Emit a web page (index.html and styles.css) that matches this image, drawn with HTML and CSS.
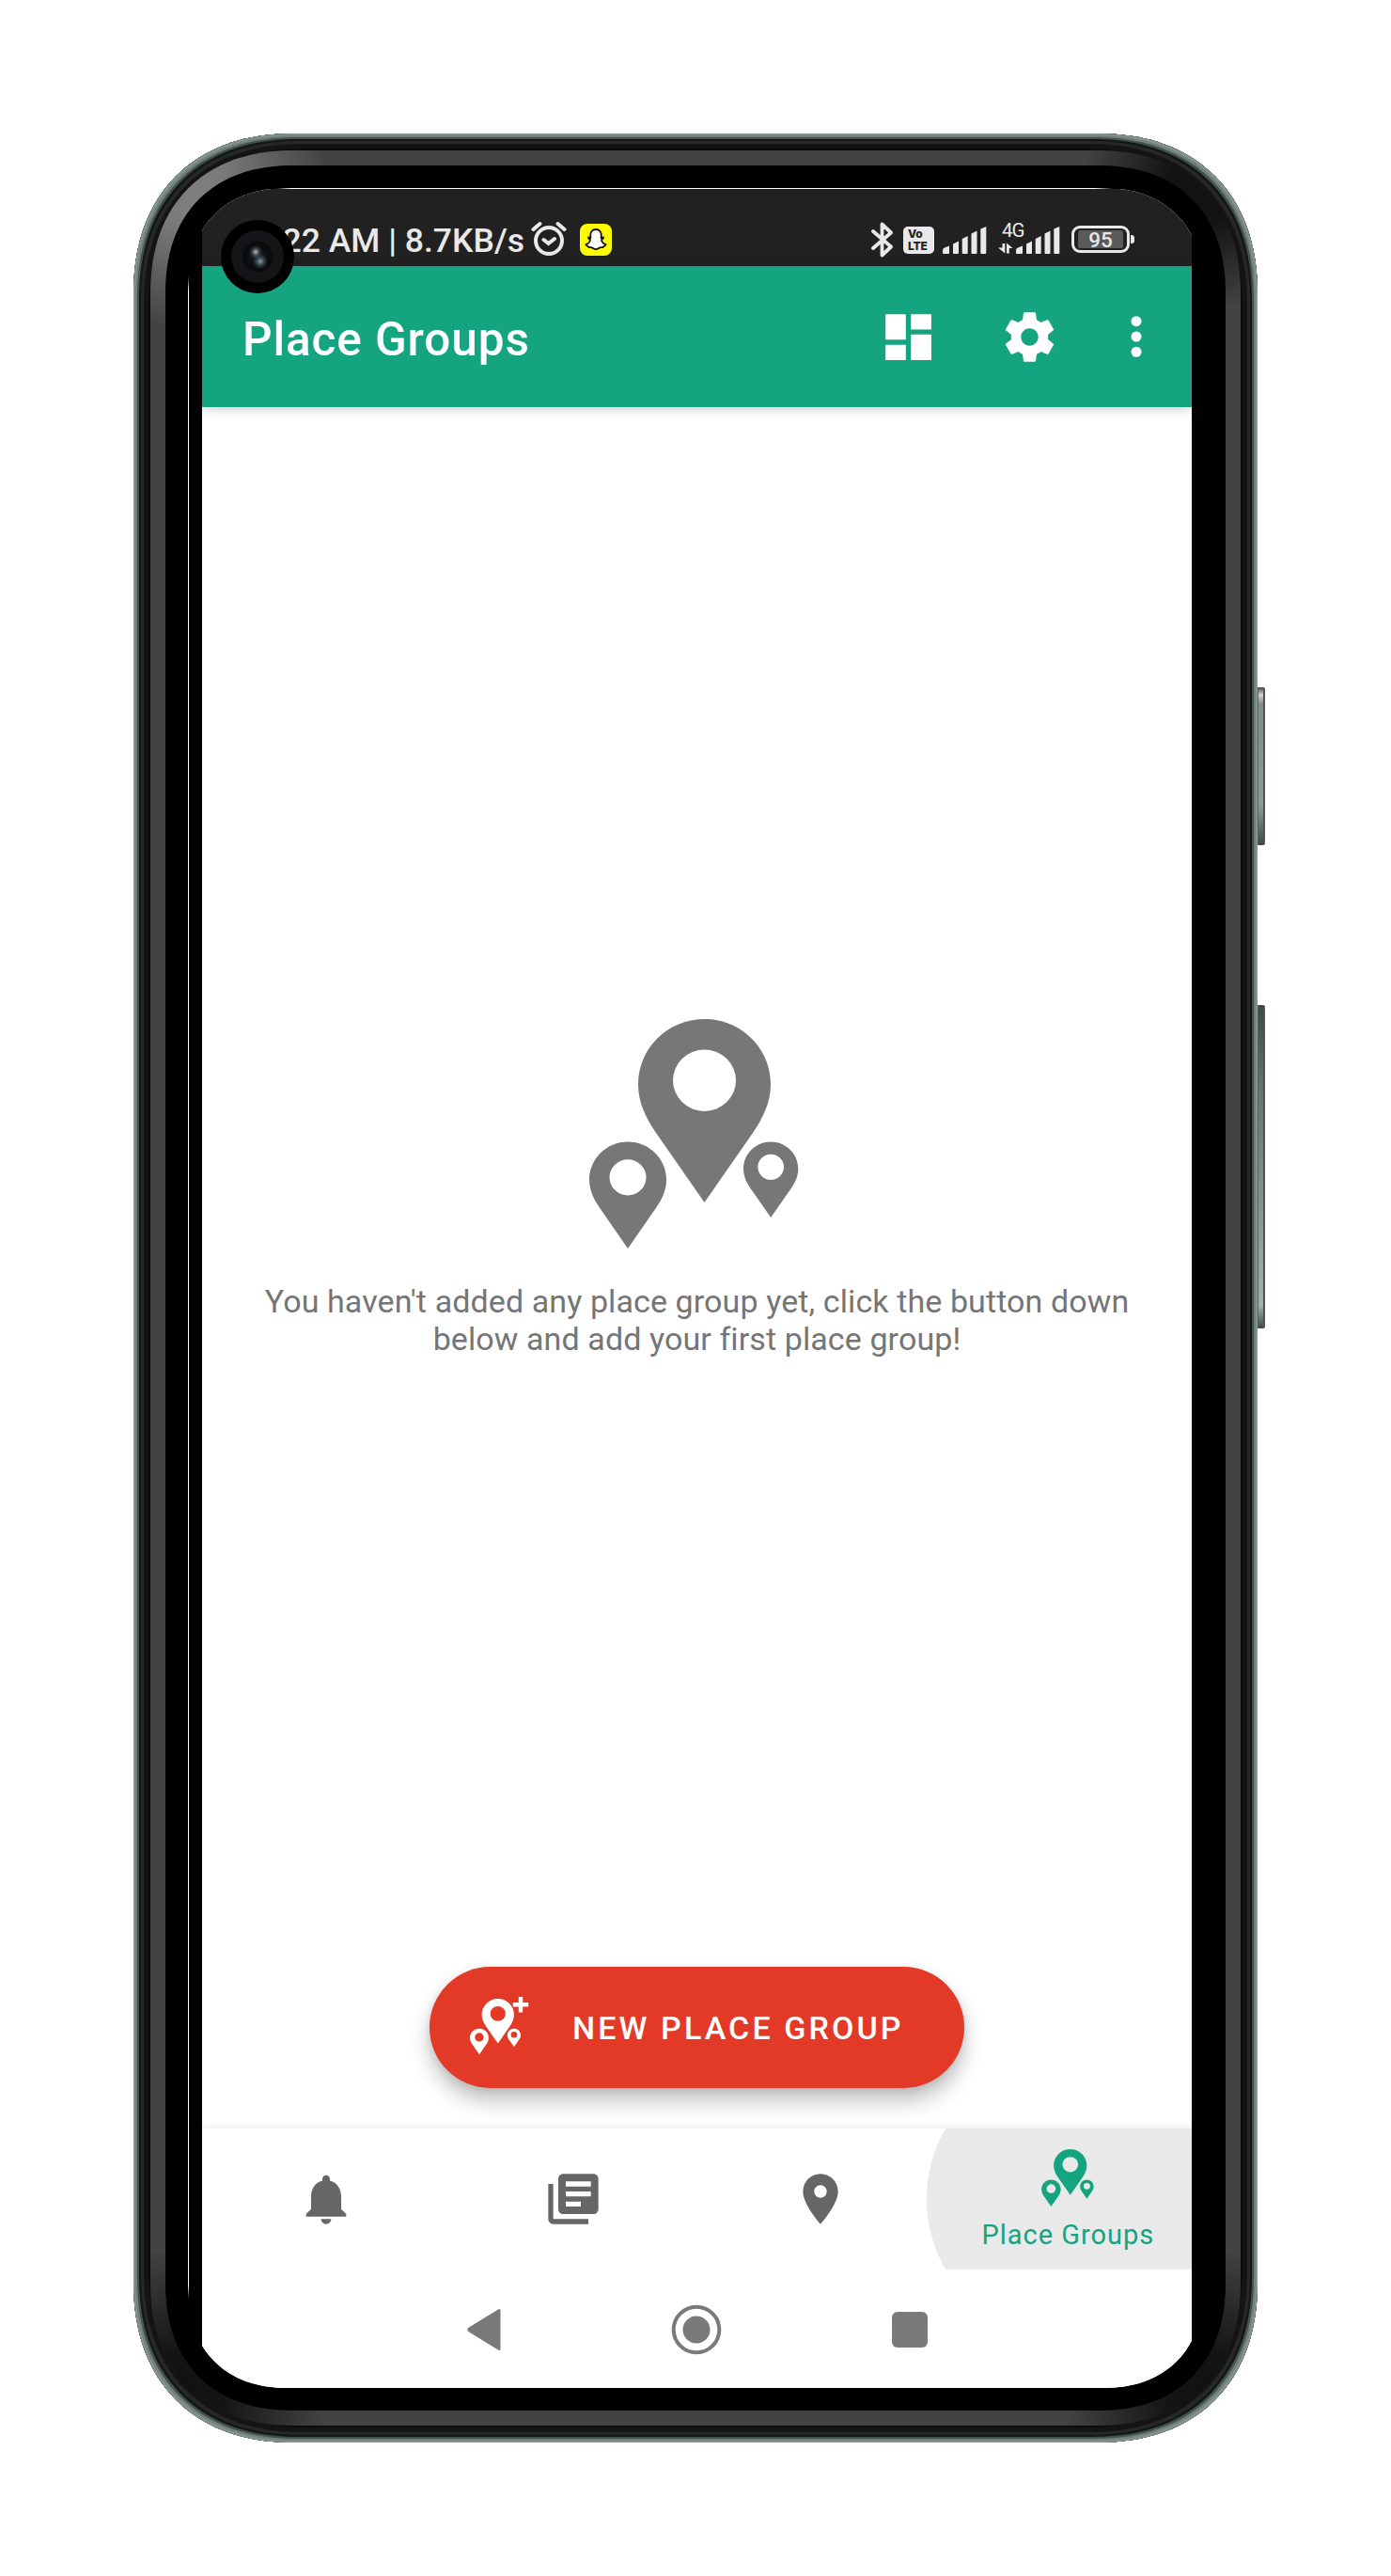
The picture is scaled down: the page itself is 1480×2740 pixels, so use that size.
FILE: index.html
```html
<!DOCTYPE html>
<html lang="en">
<head>
<meta charset="utf-8">
<title>Place Groups</title>
<link rel="stylesheet" href="styles.css">
</head>
<body>
<svg width="0" height="0" class="defs" aria-hidden="true">
  <defs>
    <path id="pin" fill-rule="evenodd" d="M70.5 0C31.5 0 0 31 0 69.5C0 88 7.5 104 19 121L70.5 195L122 121C133.5 104 141 88 141 69.5C141 31 109.5 0 70.5 0ZM70.500 32.500A33.500 32.700 0 0 1 70.500 97.900A33.500 32.700 0 0 1 70.500 32.500Z"/>
    <g id="pins">
      <use href="#pin" x="52"/>
      <use href="#pin" transform="translate(0 130.400) scale(.582)"/>
      <use href="#pin" transform="translate(164 130.400) scale(.4135)"/>
    </g>
    <path id="bars" d="M0 28v-3q0-2 2-2.500l5-2V28q0 1-1 1H1q-1 0-1-1ZM11 18.500l6-3V28q0 1-1 1h-4q-1 0-1-1ZM20.700 13l6-3V28q0 1-1 1h-4q-1 0-1-1ZM30.500 7.500l6-3V28q0 1-1 1h-4q-1 0-1-1ZM40.300 2.500l6-2.500V28q0 1-1 1h-4q-1 0-1-1Z"/>
  </defs>
</svg>
<div class="phone">
  <div class="power"></div>
  <div class="volume"></div>
  <div class="rim"><div class="bezel"><div class="glass">
    <div class="screen">
      <header class="status">
        <span class="clock">10:22 AM | 8.7KB/s</span>
        <svg class="alarm" width="40" height="38" viewBox="0 0 40 38" fill="none" stroke="#e9e9e9" stroke-width="4" stroke-linecap="round"><circle cx="20" cy="21" r="14"/><path d="M14.500 20l5 4 6.500-5M3.500 9l7-6M36.500 9l-7-6"/></svg>
        <svg class="snap" width="34" height="34" viewBox="0 0 34 34"><rect width="34" height="34" rx="8" fill="#fffc00"/><path d="M17 6c-4 0-6 3-5.700 7v2l-2.300-.5c0 2 2.500 2 2 3.500-.8 2-2.500 3.500-4.500 4.200.5 1.500 2.500 1.300 3 2.800 2 .2 3-.3 4.500 1 1.900 1.500 4.100 1.500 6 0 1.500-1.300 2.500-.8 4.500-1 .5-1.500 2.500-1.300 3-2.800-2-.7-3.700-2.200-4.500-4.200-.5-1.500 2-1.500 2-3.500l-2.300.5v-2c.3-4-1.700-7-5.700-7z" fill="#fff" stroke="#111" stroke-width="1.800"/></svg>
        <svg class="bt" width="24" height="38" viewBox="0 0 24 38" fill="none" stroke="#e9e9e9" stroke-width="3.800" stroke-linejoin="round" stroke-linecap="round"><path d="M2 10L21 26.500 11.500 35.500V2.500L21 11.500 2 28"/></svg>
        <span class="volte"><i>Vo</i><i>LTE</i></span>
        <svg class="sig1" width="47" height="29" viewBox="0 0 47 29" fill="#e9e9e9"><use href="#bars"/></svg>
        <span class="net"><span class="gen">4G</span><svg width="66" height="29" viewBox="0 0 66 29" fill="#e9e9e9"><use href="#bars" x="19"/><path d="M4.500 18h2.800v10.500L0 22.500h4.500zM9 17.500l6.500 5.500h-3.700v5.500H9z"/></svg></span>
        <span class="battery"><span class="charge">95</span></span>
      </header>
      <div class="appbar">
        <h1>Place Groups</h1>
        <svg class="dash" width="65" height="65" viewBox="0 0 24 24" fill="#fff"><path d="M3 13h8V3H3v10zm0 8h8v-6H3v6zm10 0h8V11h-8v10zm0-18v6h8V3h-8z"/></svg>
        <svg class="gear" width="63" height="63" viewBox="0 0 24 24" fill="#fff"><path d="M19.430 12.980c.04-.32.07-.64.07-.98s-.03-.66-.07-.98l2.110-1.650c.19-.15.24-.42.12-.64l-2-3.460c-.12-.22-.39-.3-.61-.22l-2.490 1c-.52-.4-1.080-.73-1.690-.98l-.38-2.650C14.460 2.180 14.250 2 14 2h-4c-.25 0-.46.18-.49.42l-.38 2.650c-.61.25-1.170.59-1.690.98l-2.490-1c-.23-.09-.49 0-.61.22l-2 3.460c-.13.22-.07.49.12.64l2.110 1.650c-.04.32-.07.65-.07.98s.03.66.07.98l-2.110 1.650c-.19.15-.24.42-.12.64l2 3.460c.12.22.39.3.61.22l2.490-1c.52.4 1.080.73 1.690.98l.38 2.650c.03.24.24.42.49.42h4c.25 0 .46-.18.49-.42l.38-2.650c.61-.25 1.170-.59 1.690-.98l2.490 1c.23.09.49 0 .61-.22l2-3.460c.12-.22.07-.49-.12-.64l-2.110-1.650zM12 15.500c-1.930 0-3.500-1.570-3.500-3.500s1.570-3.500 3.500-3.500 3.500 1.570 3.500 3.500-1.570 3.500-3.500 3.500z"/></svg>
        <svg class="more" width="12" height="44" viewBox="0 0 12 44" fill="#fff"><circle cx="6" cy="5.700" r="5.500"/><circle cx="6" cy="22" r="5.500"/><circle cx="6" cy="38.300" r="5.500"/></svg>
      </div>
      <main class="content">
        <svg class="hero" width="223" height="244" viewBox="0 0 223 244" fill="#777"><use href="#pins"/></svg>
        <p class="empty">You haven't added any place group yet, click the button down<br>below and add your first place group!</p>
        <button class="fab">
          <svg width="63" height="62" viewBox="0 0 63 62" fill="#fff"><use href="#pins" transform="translate(0 2) scale(.243)"/><path d="M51.800 0h4.400v6h6v4.400h-6v6h-4.400v-6h-6V6h6z"/></svg>
          <span>NEW PLACE GROUP</span>
        </button>
      </main>
      <nav class="tabs">
        <a><svg width="64" height="64" viewBox="0 0 24 24"><path d="M12 22c1.100 0 2-.9 2-2h-4c0 1.100.89 2 2 2zm6-6v-5c0-3.070-1.640-5.640-4.500-6.320V4c0-.83-.67-1.500-1.500-1.500s-1.500.67-1.500 1.500v.68C7.630 5.360 6 7.920 6 11v5l-2 2v1h16v-1l-2-2z"/></svg></a>
        <a><svg width="64" height="64" viewBox="0 0 24 24"><path d="M4 6H2v14c0 1.100.9 2 2 2h14v-2H4V6zm16-4H8c-1.100 0-2 .9-2 2v12c0 1.100.9 2 2 2h12c1.100 0 2-.9 2-2V4c0-1.100-.9-2-2-2zm-1 9H9V9h10v2zm-4 4H9v-2h6v2zm4-8H9V5h10v2z"/></svg></a>
        <a><svg width="64" height="64" viewBox="0 0 24 24"><path d="M12 2C8.130 2 5 5.130 5 9c0 5.250 7 13 7 13s7-7.750 7-13c0-3.870-3.130-7-7-7zm0 9.500c-1.380 0-2.500-1.120-2.500-2.500s1.120-2.500 2.500-2.500 2.500 1.120 2.500 2.500-1.120 2.500-2.500 2.500z"/></svg></a>
        <a class="active"><svg width="56" height="61" viewBox="0 0 223 244"><use href="#pins"/></svg><span>Place Groups</span></a>
      </nav>
      <footer class="sysnav">
        <svg width="36" height="46" viewBox="0 0 36 46"><path d="M33 1.500q2.500-1.500 2.500 1.500v40q0 3-2.500 1.500L1.300 25q-2-2 0-4z"/></svg>
        <svg width="54" height="54" viewBox="0 0 54 54"><circle cx="27" cy="27" r="24.300" fill="none" stroke="#7a7a7a" stroke-width="4"/><circle cx="27" cy="27" r="14.500"/></svg>
        <svg width="38" height="38" viewBox="0 0 38 38"><rect width="38" height="38" rx="6"/></svg>
      </footer>
    </div>
    <div class="camera"><div class="lens"></div></div>
  </div></div></div>
</div>
</body>
</html>
```
FILE: styles.css
```css
* { box-sizing: border-box; }
body { margin: 0; background: #fff; font-family: Roboto, "Noto Sans", sans-serif; }
.defs { position: absolute; }

/* Device shell */
.phone {
  position: relative;
  width: 1196px;
  height: 2456px;
  margin: 142px 0 0 142px;
  padding: 18px;
  border-radius: 155px;
  background: #0c0c0c;
  box-shadow: inset 0 0 0 2px #85938c, inset 0 0 0 4px #71807a, inset 0 0 0 6px #45514d, inset 0 0 0 8px #121719, inset 0 0 0 11px #272727, inset 0 0 0 16px #141414;
}
.power, .volume {
  position: absolute;
  left: 1196px;
  width: 8px;
  border-radius: 0 3px 3px 0;
  box-shadow: inset -2px 0 0 #4b5650, inset 1px 0 0 #59665f;
}
.power { top: 589px; height: 168px; background: linear-gradient(#3e4843, #d0d5d2 8px, #7f8e86 18px, #8f9c95 75%, #3e4843); }
.volume { top: 927px; height: 344px; background: linear-gradient(#3e4843, #66736c 25%, #8f9c95 70%, #a5b0aa 93%, #3e4843); }
.rim {
  height: 100%;
  padding: 16px;
  border-radius: 137px;
  background:
    radial-gradient(circle at 40px 40px, #808080 0, #7a7a7a 40px, transparent 150px),
    radial-gradient(circle at 1120px 40px, #111 0, #141414 40px, transparent 130px),
    radial-gradient(circle at 40px 2380px, #111 0, #141414 40px, transparent 150px),
    radial-gradient(circle at 1120px 2380px, #111 0, #141414 40px, transparent 150px),
    #434343;
}
.bezel { height: 100%; padding: 24px; border-radius: 121px; background: #000; }
.glass {
  position: relative;
  height: 100%;
  padding: 1px 12px 0 15px;
  border-radius: 96px;
  overflow: hidden;
  background:
    linear-gradient(90deg, transparent 92px, #fff 110px, #fff 965px, transparent 985px) 0 0 / 100% 1px no-repeat,
    linear-gradient(transparent 92px, #fff 110px, #fff 2230px, transparent 2246px) 0 0 / 1px 100% no-repeat,
    #000;
}
/* Continuous-curvature corners where the engine has them */
@supports (corner-shape: squircle) {
  .phone, .rim, .bezel, .glass { corner-shape: superellipse(1.18); }
  .phone { border-radius: 172px; }
  .rim { border-radius: 153px; }
  .bezel { border-radius: 136px; }
  .glass { border-radius: 107px; }
}
.screen { display: flex; flex-direction: column; height: 100%; background: #fff; }

/* Status bar */
.status {
  display: flex;
  align-items: flex-start;
  height: 82px;
  background: #212121;
  color: #e9e9e9;
}
.clock { width: 343px; margin-top: 34px; text-align: right; white-space: nowrap; font: 500 35.500px/42px Roboto, sans-serif; letter-spacing: 0; }
.alarm { margin: 34px 0 0 6px; }
.snap { margin: 37px 0 0 13px; }
.bt { margin: 35px 0 0 276px; }
.volte {
  display: flex;
  flex-direction: column;
  width: 33px;
  height: 29px;
  margin: 40px 0 0 10px;
  padding: 2px 0 0 5px;
  border-radius: 5px;
  background: #e9e9e9;
  color: #212121;
}
.volte i { font: 800 12px/12.500px Inter, sans-serif; letter-spacing: -.2px; }
.sig1 { margin: 40px 0 0 9px; }
.net { display: flex; flex-direction: column; margin: 36px 0 0 12px; height: 36px; }
.gen { height: 4px; padding-left: 4px; font: 400 20.500px/16px Roboto, sans-serif; letter-spacing: -1px; }
.battery {
  position: relative;
  width: 62px;
  height: 29px;
  margin: 39px 0 0 12px;
  padding: 2px 4px;
  border: 3px solid #e9e9e9;
  border-radius: 9px;
}
.battery::after { content: ""; position: absolute; left: 60px; top: 7px; width: 4px; height: 9px; border-radius: 0 3px 3px 0; background: #e9e9e9; }
.charge { display: block; height: 19px; border-radius: 2px; background: #5a5a5a; text-align: center; font: 500 22.500px/21px Roboto, sans-serif; }

/* App bar */
.appbar {
  position: relative;
  display: flex;
  align-items: center;
  height: 150px;
  padding-left: 43px;
  background: #14a480;
  box-shadow: 0 2px 12px rgba(0, 0, 0, .2);
  color: #fff;
}
.appbar h1 { width: 649px; margin: 5px 0 0; font: 500 49.500px/60px Roboto, sans-serif; letter-spacing: .9px; white-space: nowrap; }
.dash { margin-left: 27px; }
.gear { margin-left: 65px; }
.more { margin-left: 76px; }

/* Empty state */
.content { flex: 1; display: flex; flex-direction: column; align-items: center; }
.hero { margin: 651px 7px 0 0; }
.empty { margin: 36px 0 0; text-align: center; white-space: nowrap; font: 400 34px/40px Roboto, sans-serif; letter-spacing: .1px; color: #757575; }
.fab {
  display: flex;
  align-items: center;
  width: 569px;
  height: 129px;
  margin: auto 0 43px;
  padding: 0 0 0 43px;
  border: 0;
  border-radius: 65px;
  background: #e33a27;
  box-shadow: 0 14px 22px rgba(0, 0, 0, .24), 0 2px 8px rgba(0, 0, 0, .1);
  color: #fff;
  font: 500 34px/40px Roboto, sans-serif;
  letter-spacing: 3.100px;
  white-space: nowrap;
}
.fab svg { margin-bottom: 3px; }
.fab span { margin: 1px 0 0 46px; }

/* Bottom tabs */
.tabs {
  position: relative;
  display: flex;
  height: 150px;
  background: radial-gradient(circle at 921.500px 75px, #e9e9e9 150px, #fff 151px);
  box-shadow: 0 -2px 8px rgba(0, 0, 0, .07);
  fill: #666;
}
.tabs a { flex: 1 1 0; display: flex; flex-direction: column; align-items: center; justify-content: center; }
.tabs .active {
  justify-content: flex-start;
  padding-top: 22px;
  fill: #14a480;
  color: #14a480;
  font: 400 29px/34px Roboto, sans-serif;
  letter-spacing: 1px;
  white-space: nowrap;
}
.active span { margin-top: 13px; }

.sysnav { position: relative; display: flex; align-items: center; justify-content: center; gap: 181px; height: 126px; padding-top: 2px; background: #fff; fill: #7a7a7a; }

/* Front camera */
.camera {
  position: absolute;
  left: 35px;
  top: 34px;
  width: 78px;
  height: 78px;
  padding: 11px;
  border-radius: 50%;
  background: #000;
}
.lens {
  height: 56px;
  border-radius: 50%;
  background:
    radial-gradient(circle at 26px 23px, #b5b8bc 0, rgba(80, 84, 90, .6) 4px, transparent 7px),
    radial-gradient(circle at 31px 33px, #8b9bab 0, rgba(70, 84, 96, .7) 4px, transparent 8px),
    radial-gradient(circle at 28px 28px, #1b2126 0, #0c0e10 10px, #0a0a0c 15px, #151517 17px);
}
```
